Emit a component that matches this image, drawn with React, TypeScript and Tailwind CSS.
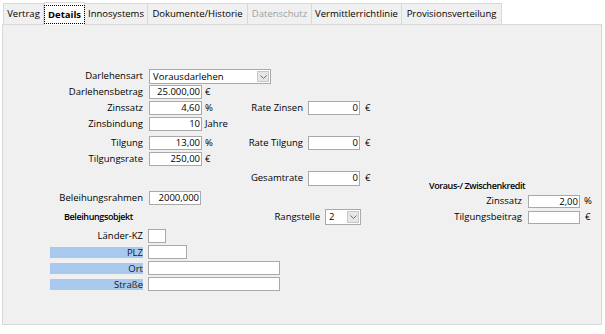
import React from 'react';

const tabs = [
  { label: 'Vertrag', w: 'w-[41px]' },
  { label: 'Details', w: 'w-[41px]', active: true },
  { label: 'Innosystems', w: 'w-[63px]' },
  { label: 'Dokumente/Historie', w: 'w-[100px]' },
  { label: 'Datenschutz', w: 'w-[64px]', disabled: true },
  { label: 'Vermittlerrichtlinie', w: 'w-[90px]' },
  { label: 'Provisionsverteilung', w: 'w-[100px]' },
];

const Chevron = () => (
  <svg width="7" height="4" viewBox="0 0 7 4">
    <polyline points="0.5,0.5 3.5,3.5 6.5,0.5" fill="none" stroke="#707070" strokeWidth="1" />
  </svg>
);

const Field: React.FC<{ value?: string; w: string; h?: string }> = ({ value = '', w, h = 'h-[14px]' }) => (
  <div className={`${w} ${h} shrink-0 border border-[#a9a9a9] bg-white pr-[1px] text-right leading-[12px]`}>
    {value}
  </div>
);

const Combo: React.FC<{ value: string; w: string; h?: string }> = ({ value, w, h = 'h-[15px]' }) => (
  <div className={`${w} ${h} flex shrink-0 border border-[#a9a9a9] bg-white`}>
    <div className="flex-1 pl-[3px] text-left leading-[13px]">{value}</div>
    <div className="m-[1px] flex w-[12px] items-center justify-center border border-[#c8c8c8] bg-[#e6e6e6]">
      <Chevron />
    </div>
  </div>
);

const Label: React.FC<{ children: React.ReactNode; w?: string }> = ({ children, w = 'w-[140px]' }) => (
  <div className={`${w} shrink-0 whitespace-nowrap text-right`}>{children}</div>
);

const BlueLabel: React.FC<{ children: React.ReactNode }> = ({ children }) => (
  <div className="ml-[47px] h-[11px] w-[93px] shrink-0 bg-[#a8c8ee] text-right leading-[11px] text-[#101828]">
    {children}
  </div>
);

export default function App() {
  return (
    <div className="h-[334px] w-[605px] overflow-hidden bg-white text-[9.5px] text-black font-['Open_Sans','Noto_Sans',sans-serif]">
      {/* Tabs */}
      <div className="flex h-[24px] items-end pl-[3px]">
        {tabs.map((t, i) => (
          <div
            key={t.label}
            className={`${t.w} flex items-center justify-center whitespace-nowrap border-t border-r border-[#d9d9d9] ${
              i === 0 ? 'border-l' : ''
            } ${
              t.active
                ? 'relative z-10 -mb-px h-[23px] border-l bg-white font-bold'
                : 'h-[21px] bg-[#f0f0f0]'
            } ${t.disabled ? 'text-[#a0a0a0]' : ''}`}
          >
            {t.active ? (
              <span className="border border-dotted border-black px-[3px] leading-[17px]">{t.label}</span>
            ) : (
              t.label
            )}
          </div>
        ))}
      </div>

      {/* Panel */}
      <div className="ml-[2px] h-[301px] w-[600px] border border-[#d9d9d9] bg-[#f0f0f0]">
        <div className="flex flex-col pt-[44px]">
          <div className="flex h-[15px] items-center">
            <Label>Darlehensart</Label>
            <div className="ml-[6px]">
              <Combo value="Vorausdarlehen" w="w-[122px]" />
            </div>
          </div>

          <div className="mt-[1px] flex h-[14px] items-center">
            <Label>Darlehensbetrag</Label>
            <div className="ml-[6px]"><Field value="25.000,00" w="w-[53px]" /></div>
            <span className="ml-[3px]">€</span>
          </div>

          <div className="mt-[2px] flex h-[14px] items-center">
            <div className="flex w-[237px] shrink-0 items-center">
              <Label>Zinssatz</Label>
              <div className="ml-[6px]"><Field value="4,60" w="w-[53px]" /></div>
              <span className="ml-[3px]">%</span>
            </div>
            <Label w="w-[63px]">Rate Zinsen</Label>
            <div className="ml-[5px]"><Field value="0" w="w-[52px]" /></div>
            <span className="ml-[5px]">€</span>
          </div>

          <div className="mt-[2px] flex h-[14px] items-center">
            <Label>Zinsbindung</Label>
            <div className="ml-[6px]"><Field value="10" w="w-[53px]" /></div>
            <span className="ml-[3px]">Jahre</span>
          </div>

          <div className="mt-[5px] flex h-[14px] items-center">
            <div className="flex w-[237px] shrink-0 items-center">
              <Label>Tilgung</Label>
              <div className="ml-[6px]"><Field value="13,00" w="w-[53px]" /></div>
              <span className="ml-[3px]">%</span>
            </div>
            <Label w="w-[63px]">Rate Tilgung</Label>
            <div className="ml-[5px]"><Field value="0" w="w-[52px]" /></div>
            <span className="ml-[5px]">€</span>
          </div>

          <div className="mt-[2px] flex h-[14px] items-center">
            <Label>Tilgungsrate</Label>
            <div className="ml-[6px]"><Field value="250,00" w="w-[53px]" /></div>
            <span className="ml-[3px]">€</span>
          </div>

          {/* Lower section */}
          <div className="mt-[5px] flex">
            <div className="flex w-[417px] shrink-0 flex-col">
              <div className="flex h-[15px] items-center pl-[237px]">
                <Label w="w-[63px]">Gesamtrate</Label>
                <div className="ml-[5px]"><Field value="0" w="w-[52px]" h="h-[15px]" /></div>
                <span className="ml-[5px]">€</span>
              </div>

              <div className="mt-[5px] flex h-[14px] items-center">
                <Label>Beleihungsrahmen</Label>
                <div className="ml-[6px]"><Field value="2000,000" w="w-[52px]" /></div>
              </div>

              <div className="mt-[4px] flex h-[16px] items-center">
                <Label>
                  <span className="pr-[10px] text-[9px] font-semibold tracking-[-0.4px]">Beleihungsobjekt</span>
                </Label>
                <Label w="w-[177px]">Rangstelle</Label>
                <div className="ml-[5px]"><Combo value="2" w="w-[36px]" h="h-[16px]" /></div>
              </div>

              <div className="mt-[4px] flex h-[14px] items-center">
                <Label>Länder-KZ</Label>
                <div className="ml-[5px]"><Field w="w-[18px]" /></div>
              </div>

              <div className="mt-[2px] flex h-[14px] items-center">
                <BlueLabel>PLZ</BlueLabel>
                <div className="ml-[5px]"><Field w="w-[39px]" /></div>
              </div>

              <div className="mt-[2px] flex h-[14px] items-center">
                <BlueLabel>Ort</BlueLabel>
                <div className="ml-[5px]"><Field w="w-[132px]" /></div>
              </div>

              <div className="mt-[2px] flex h-[14px] items-center">
                <BlueLabel>Straße</BlueLabel>
                <div className="ml-[5px]"><Field w="w-[132px]" /></div>
              </div>
            </div>

            {/* Voraus-/ Zwischenkredit */}
            <div className="flex flex-col pt-[8px]">
              <div className="h-[13px] pl-[9px] text-[9px] font-semibold leading-[13px] tracking-[-0.4px]">
                Voraus-/ Zwischenkredit
              </div>
              <div className="mt-[3px] flex h-[13px] items-center">
                <Label w="w-[102px]">Zinssatz</Label>
                <div className="ml-[6px]"><Field value="2,00" w="w-[52px]" h="h-[13px]" /></div>
                <span className="ml-[4px]">%</span>
              </div>
              <div className="mt-[3px] flex h-[13px] items-center">
                <Label w="w-[102px]">Tilgungsbeitrag</Label>
                <div className="ml-[6px]"><Field w="w-[52px]" h="h-[13px]" /></div>
                <span className="ml-[5px]">€</span>
              </div>
            </div>
          </div>
        </div>
      </div>
    </div>
  );
}
